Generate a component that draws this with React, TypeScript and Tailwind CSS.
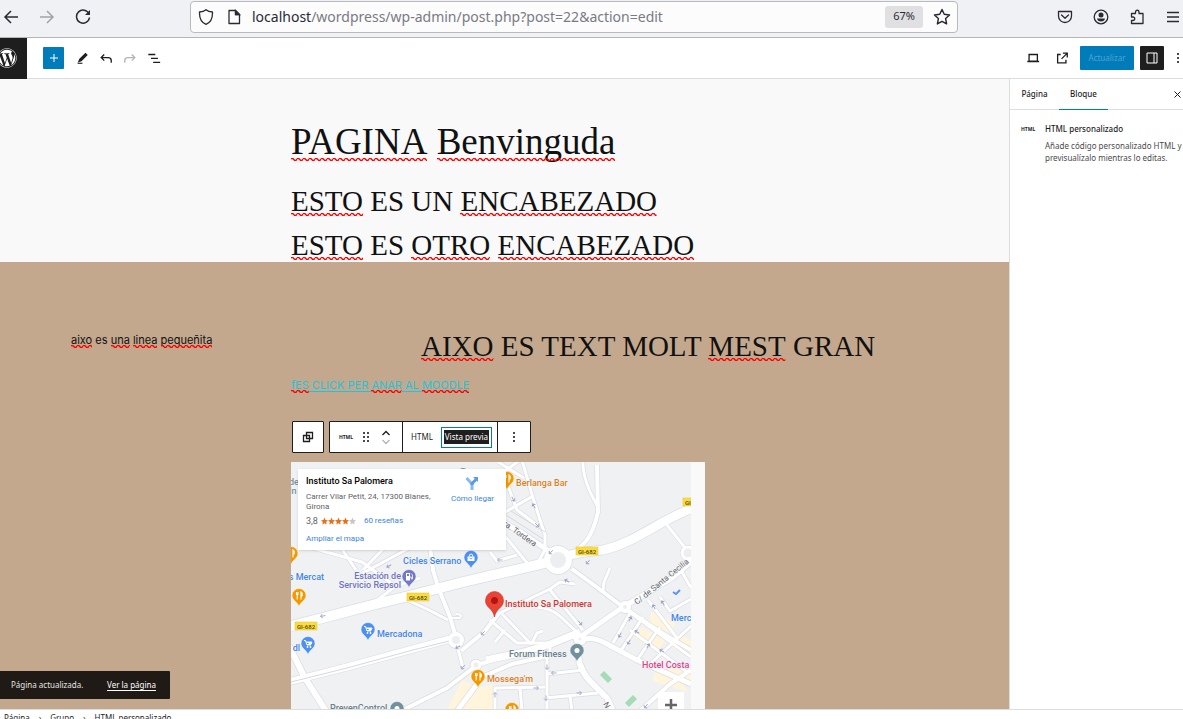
import React, { useState } from 'react';
import { FaWordpress } from 'react-icons/fa';

type IconProps = {
  size?: number;
  className?: string;
  children: React.ReactNode;
  viewBox?: string;
};

type PinProps = {
  x: number;
  y: number;
  color: string;
  kind?: 'food' | 'cart' | 'bag' | 'fuel' | 'dot';
};

//================== Map Data ==================
const roads: { d: string; w: number }[] = [
  // small streets
  { d: 'M522 460 L533 498 L545 535 V552', w: 3 },
  { d: 'M505 478 L517 510 L538 526', w: 3 },
  { d: 'M502 514 L533 496', w: 3 },
  { d: 'M498 462 L524 478 M520 460 L505 471', w: 3 },
  { d: 'M583 460 Q582 480 598 507', w: 3 },
  { d: 'M597 465 L598 512 Q594 530 587 540 L572 556', w: 4 },
  { d: 'M505 536 L528 564 M490 552 L497 561 L517 555', w: 3 },
  { d: 'M546 548 L537 564', w: 3 },
  { d: 'M667 525 L686 549', w: 3 },
  { d: 'M691 558 L682 572 L691 588', w: 3 },
  { d: 'M312 548 L362 562 L395 586', w: 3 },
  { d: 'M340 546 L356 570 M363 570 L384 548', w: 3 },
  { d: 'M376 601 L396 586 L420 578', w: 3 },
  { d: 'M363 573 L413 546', w: 3 },
  { d: 'M430 546 L433 570 L438 587 L450 617 L455 634', w: 4 },
  { d: 'M407 600 L427 609 L448 620', w: 3 },
  { d: 'M450 618 H460 Q463 614 456 614', w: 2 },
  { d: 'M461 651 L484 632 L500 612', w: 4 },
  { d: 'M500 613 L550 589 L560 582 L575 584', w: 3 },
  { d: 'M572 569 L598 588 L623 607', w: 4 },
  { d: 'M603 590 L604 582 L610 568', w: 3 },
  { d: 'M550 590 L583 630', w: 3 },
  { d: 'M533 607 Q550 606 562 618 L580 635', w: 3 },
  { d: 'M502 614 L530 643 H550 V652', w: 3 },
  { d: 'M490 620 L517 643 L532 643 L537 633 L543 631', w: 3 },
  { d: 'M495 642 L505 630', w: 3 },
  { d: 'M463 668 L457 645', w: 3 },
  { d: 'M405 709 L447 688 L477 665 L500 658', w: 4 },
  { d: 'M547 655 V711 M548 674 L583 670', w: 3 },
  { d: 'M495 711 V688 L545 687 M520 688 L522 711', w: 3 },
  { d: 'M545 698 L598 693 M570 696 L572 711', w: 3 },
  { d: 'M630 613 L613 643 M643 617 L620 652', w: 3 },
  { d: 'M660 627 L637 660 M691 626 L650 664', w: 3 },
  { d: 'M635 616 L691 657 M630 630 L687 672', w: 3 },
  { d: 'M648 600 L677 638 M660 597 L670 611 L691 599', w: 3 },
  { d: 'M691 670 L670 684 L640 711', w: 4 },
  // avenues
  { d: 'M500 520 L522 533 L549 551', w: 5 },
  { d: 'M583 635 L623 607 L672 578 L691 562', w: 5 },
  { d: 'M623 607 L657 630 L691 650', w: 4 },
  { d: 'M580 640 Q593 636 605 643 L637 660 L691 684', w: 5 },
  { d: 'M486 660 L520 653 L548 645 L580 632', w: 7 },
  { d: 'M484 676 L512 664 L548 656', w: 4 },
  { d: 'M578 655 Q580 672 592 683 L607 698 L613 711', w: 6 },
  { d: 'M477 684 L457 711', w: 5 },
  { d: 'M289 646 L305 678 L326 711', w: 6 },
  { d: 'M288 682 L347 667 L413 649 L450 639', w: 7 },
  { d: 'M288 627 L380 603 L413 595 L463 582 L545 563', w: 10 },
  { d: 'M570 555 Q586 551 603 550 C635 543 660 520 693 508', w: 9 },
];

const roundabouts = [
  { x: 558, y: 560, r: 11, w: 6 },
  { x: 456, y: 640, r: 6, w: 4 },
  { x: 476, y: 665, r: 4, w: 3 },
  { x: 580, y: 639, r: 4, w: 5 },
  { x: 688, y: 553, r: 6, w: 3 },
  { x: 625, y: 607, r: 4, w: 4 },
];

const arrows = [
  [323, 616, 170], [389, 566, 150], [458, 647, 150], [463, 667, 130], [483, 633, 135],
  [513, 499, 60], [534, 506, 240], [537, 525, 45], [551, 552, 140], [500, 560, 180],
  [588, 562, 130], [567, 581, 210], [580, 623, 50], [547, 667, 90], [554, 673, 180],
  [536, 688, 0], [546, 698, 90], [579, 693, 0], [495, 695, 270], [630, 619, 300],
  [620, 635, 120], [629, 642, 120], [648, 646, 300], [654, 607, 240], [663, 603, 240],
  [637, 632, 210], [662, 651, 210], [646, 706, 130],
];

//================== Shared Pieces ==================
const Icon = ({ size = 16, className = '', children, viewBox = '0 0 16 16' }: IconProps) => (
  <svg width={size} height={size} viewBox={viewBox} fill="none" stroke="currentColor" strokeWidth={1.3} className={`shrink-0 ${className}`} aria-hidden="true">
    {children}
  </svg>
);

// Word with the red spell checker line under it
const Typo = ({ children }: { children: React.ReactNode }) => (
  <span className="relative inline-block">
    {children}
    <svg className="absolute bottom-px left-0 h-[3px] w-full" aria-hidden="true">
      <defs>
        <pattern id="squiggle" width="6" height="3" patternUnits="userSpaceOnUse">
          <path d="M-1 1.500 L0 0.700 H2 L3.500 2.300 H5 L6.500 0.700" fill="none" stroke="#f00" strokeWidth="1.300" />
        </pattern>
      </defs>
      <rect width="100%" height="3" fill="url(#squiggle)" />
    </svg>
  </span>
);

const Dots = ({ className = '' }: { className?: string }) => (
  <svg width="4" height="14" viewBox="0 0 4 14" fill="#4a4a4a" className={className} aria-hidden="true">
    <rect x="1" y="2" width="2" height="2" />
    <rect x="1" y="6" width="2" height="2" />
    <rect x="1" y="10" width="2" height="2" />
  </svg>
);

const Pin = ({ x, y, color, kind = 'dot' }: PinProps) => (
  <g transform={`translate(${x} ${y})`}>
    <path d="M0 11 C-1 6 -7 4.500 -7 -0.500 A7 7 0 0 1 7 -0.500 C7 4.500 1 6 0 11Z" fill={color} stroke="#fff" strokeWidth="0.500" />
    {kind === 'food' && <path d="M-2.500 -4 V-1 M-1 -4 V-1 M-2.800 -1.500 H-0.800 M-1.800 -1 V3.500 M2 3.500 V-4 Q4 -2.500 3 0 H2" fill="none" stroke="#fff" strokeWidth="1.100" />}
    {kind === 'cart' && (
      <g fill="#fff">
        <path d="M-4 -3.500 H-2.500 L-1 1 H3 M-2 -2 H4 L3 0.500 H-1" stroke="#fff" strokeWidth="0.900" />
        <circle cx="-0.500" cy="3" r="0.900" />
        <circle cx="2.500" cy="3" r="0.900" />
      </g>
    )}
    {kind === 'bag' && (
      <g>
        <path d="M-3.500 -1.500 H3.500 V3 H-3.500Z" fill="#fff" />
        <path d="M-1.800 -1.500 Q-1.800 -4 0 -4 T1.800 -1.500" fill="none" stroke="#fff" />
        <path d="M-1.500 0 Q0 2 1.500 0" fill="none" stroke={color} strokeWidth="0.800" />
      </g>
    )}
    {kind === 'fuel' && (
      <g>
        <path d="M-3 -4 H1 V3.500 H-3Z" fill="#fff" />
        <path d="M-2 -3 H0 V-1 H-2Z" fill={color} />
        <path d="M1 0 H2.300 V2 H3.500 V-2 L2 -3.500" fill="none" stroke="#fff" strokeWidth="0.800" />
      </g>
    )}
    {kind === 'dot' && <circle r="2.500" cy="-0.500" fill="#fff" />}
  </g>
);

const RoadSign = ({ x, y }: { x: number; y: number }) => (
  <g>
    <rect x={x - 11} y={y - 4} width="22" height="8" fill="#fbdc3c" stroke="#e6c32e" strokeWidth="0.500" />
    <text x={x - 9} y={y + 3} fontSize="6" fontWeight="500" fill="#4d4719">GI-682</text>
  </g>
);

//================== Browser Toolbar ==================
const BrowserBar = () => (
  <header className="flex h-[38px] shrink-0 items-center border-b border-[#b5b6b9] bg-[#f0f1f4] pb-1 text-[#2b2a33]">
    <nav className="flex w-[190px] items-center gap-5 pl-[3px]">
      <button type="button" aria-label="Atrás">
        <Icon><path d="M15 8H2M8 2L2 8l6 6" strokeWidth={1.5} /></Icon>
      </button>
      <button type="button" aria-label="Adelante" disabled className="text-[#a3a3a7]">
        <Icon><path d="M1 8h13M8 2l6 6-6 6" strokeWidth={1.5} /></Icon>
      </button>
      <button type="button" aria-label="Recargar">
        <Icon><path d="M14 5A6.500 6.500 0 1 0 14.500 8.500" strokeWidth={1.5} /><path d="M15 1v5h-5z" fill="currentColor" stroke="none" /></Icon>
      </button>
    </nav>
    <div className="flex h-8 w-[768px] items-center rounded-[4px] border border-[#b9babd] bg-[#fcfcfd] pl-[7px] pr-1.5">
      <Icon><path d="M8 .8C6.500 2.200 4 3 1.500 3 1.300 8.500 3.500 13.500 8 15.300 12.500 13.500 14.700 8.500 14.500 3 12 3 9.500 2.200 8 .8z" strokeLinejoin="round" /></Icon>
      <Icon className="ml-3"><path d="M3 1.500h6.500L13.500 5.500v9H3zM9.500 1.500v4h4" strokeLinejoin="round" /><path d="M9.500 1.500v4h4z" fill="currentColor" /></Icon>
      <p className="ml-2.5 min-w-0 flex-1 truncate text-sm leading-5">
        localhost<span className="text-[#7b7a82]">/wordpress/wp-admin/post.php?post=22&amp;action=edit</span>
      </p>
      <button type="button" className="h-[22px] rounded-[3px] bg-[#e0e0e2] px-2 text-[11px]">67%</button>
      <button type="button" aria-label="Añadir a marcadores" className="ml-2.5">
        <Icon size={18}><path d="M8 1.300l2 4.300 4.700.6-3.500 3.200.9 4.700L8 11.800l-4.100 2.300.9-4.700L1.300 6.200 6 5.600z" strokeLinejoin="round" /></Icon>
      </button>
    </div>
    <div className="ml-auto flex w-[126px] shrink-0 items-center gap-5 pr-1">
      <button type="button" aria-label="Pocket">
        <Icon><path d="M1.500 2.500h13V7a6.500 6.500 0 0 1-13 0zM4.500 6L8 9.300 11.500 6" strokeLinejoin="round" strokeLinecap="round" /></Icon>
      </button>
      <button type="button" aria-label="Cuenta">
        <Icon><circle cx="8" cy="8" r="6.800" /><circle cx="8" cy="6" r="2.500" fill="currentColor" stroke="none" /><path d="M4 9.500h8Q11.500 12.500 8 12.500T4 9.500z" fill="currentColor" stroke="none" /></Icon>
      </button>
      <button type="button" aria-label="Extensiones">
        <Icon><path d="M2.500 4.500H6.500V3A1.700 1.700 0 0 1 10 3V4.500H14V14.500H2.500V11.500H4A1.700 1.700 0 0 0 4 8H2.500z" strokeLinejoin="round" /></Icon>
      </button>
      <button type="button" aria-label="Menú">
        <Icon><path d="M2 3.500h12M2 8h12M2 12.500h12" strokeWidth={1.5} /></Icon>
      </button>
    </div>
  </header>
);

//================== Editor Header ==================
const EditorHeader = () => (
  <div className="flex h-[41px] shrink-0 items-center border-b border-[#dddddd] bg-white text-[#1e1e1e]">
    <a href="#" aria-label="Ver páginas" className="flex h-[41px] w-[27px] items-center overflow-hidden bg-[#1e1e1e] text-white">
      <FaWordpress size={20} className="-ml-[3px] shrink-0" />
    </a>
    <div className="ml-4 flex items-center gap-2.5">
      <button type="button" aria-label="Añadir bloque" className="mr-px flex h-[22px] w-[21px] items-center justify-center rounded-[1px] bg-[#007cba] text-white">
        <Icon size={10} viewBox="0 0 10 10"><path d="M5 1v8M1 5h8" strokeWidth={1} /></Icon>
      </button>
      <button type="button" aria-label="Herramientas">
        <Icon size={14}><path d="M5.500 9.500L12 3l1.500 1.500-6.500 6.500-2.500.8z" fill="currentColor" strokeWidth={1.500} /><path d="M3 14h5.500" /></Icon>
      </button>
      <button type="button" aria-label="Deshacer">
        <Icon size={14}><path d="M6 4L2.500 7.500l3.500 3.500M2.500 7.500h8q3.500 0 3.500 3.500v2.500" strokeWidth={1.500} /></Icon>
      </button>
      <button type="button" aria-label="Rehacer" disabled className="text-[#b4b4b4]">
        <Icon size={14}><path d="M10 4l3.500 3.500L10 11M13.500 7.500h-8q-3.500 0-3.500 3.500v2.500" strokeWidth={1.500} /></Icon>
      </button>
      <button type="button" aria-label="Vista de lista">
        <Icon size={14}><path d="M1.500 4h8M4.500 8.500h8M7 13h8" strokeWidth={1.500} /></Icon>
      </button>
    </div>
    <div className="ml-auto flex items-center gap-[6px]">
      <button type="button" aria-label="Ver" className="mr-[9px]">
        <Icon size={14}><path d="M3.500 4h9.500v7.500h-9.500zM1.500 12h13.500" strokeWidth={1.500} /></Icon>
      </button>
      <button type="button" aria-label="Ver página" className="mr-[5px]">
        <Icon size={14}><path d="M6.500 4H3v9.500h9.500v-3.500M9 2.500h5v5M13.500 3L7.500 9" strokeWidth={1.500} /></Icon>
      </button>
      <button type="button" disabled className="h-6 w-[54px] rounded-[1px] bg-[#007cba] text-[8px] text-[#4fa5d0]">Actualizar</button>
      <button type="button" aria-label="Ajustes" className="flex h-6 w-6 items-center justify-center rounded-[1px] bg-[#1e1e1e] text-white">
        <Icon size={12} viewBox="0 0 12 12"><path d="M1 1h10v10H1zM8 1v10" strokeWidth={1} /></Icon>
      </button>
      <button type="button" aria-label="Opciones" className="ml-1.5 mr-[3px]"><Dots /></button>
    </div>
  </div>
);

//================== Block Toolbar ==================
const BlockToolbar = () => (
  <div className="flex h-8 gap-[5px] pl-px text-[8px] leading-3 text-[#1e1e1e]">
    <button type="button" aria-label="Seleccionar grupo" className="flex w-8 items-center justify-center rounded-[1px] border border-[#1e1e1e] bg-white">
      <Icon size={12} viewBox="0 0 12 12"><path d="M4.500 1.500h6v6h-6zM1.500 4.500h6v6h-6z" /></Icon>
    </button>
    <div className="flex divide-x divide-[#1e1e1e] rounded-[1px] border border-[#1e1e1e] bg-white">
      <div className="flex w-[73px] items-center gap-2 pl-2">
        <button type="button" className="w-4 text-[5px] font-bold">HTML</button>
        <button type="button" aria-label="Arrastrar">
          <svg width="8" height="12" viewBox="0 0 8 12" fill="#4a4a4a" aria-hidden="true">
            {[1, 5, 9].map(y => (
              <g key={y}>
                <rect x="1" y={y} width="2" height="2" />
                <rect x="5" y={y} width="2" height="2" />
              </g>
            ))}
          </svg>
        </button>
        <div className="flex flex-col gap-[3px] pl-1">
          <button type="button" aria-label="Mover arriba"><svg width="8" height="6" viewBox="0 0 8 6" fill="none" stroke="#1e1e1e" strokeWidth="1.300"><path d="M0.500 5L4 1.500L7.500 5" /></svg></button>
          <button type="button" aria-label="Mover abajo" disabled><svg width="8" height="6" viewBox="0 0 8 6" fill="none" stroke="#b4b4b4" strokeWidth="1.300"><path d="M0.500 1L4 4.500L7.500 1" /></svg></button>
        </div>
      </div>
      <div className="flex w-[95px] items-center justify-between pl-2 pr-[5px]">
        <button type="button">HTML</button>
        <button type="button" className="flex h-[21px] items-center border border-[#007cba] px-0.5">
          <span className="bg-[#1e1e1e] px-px py-px text-white">Vista previa</span>
        </button>
      </div>
      <button type="button" aria-label="Opciones" className="flex w-8 items-center justify-center"><Dots /></button>
    </div>
  </div>
);

//================== Map ==================
const MapEmbed = () => (
  <div className="relative w-[400px] font-['Roboto',sans-serif]">
    <svg width="400" height="300" viewBox="291 462 400 300" className="block" role="img" aria-label="Mapa de Instituto Sa Palomera">
      <rect x="291" y="462" width="400" height="300" fill="#f0f1f3" />
      <g fill="#fef5dc">
        <path d="M462 680 L478 688 L497 684 L497 711 H446Z" />
        <path d="M651 612 L675 623 L672 634 L650 624Z M641 627 L665 640 L658 652 L634 638Z M676 633 L691 640 V656 L668 646Z M655 669 L678 676 L688 692 L653 681Z M672 660 L691 668 V680 L668 672Z" />
      </g>
      <g fill="none" stroke="#dadde3" strokeLinejoin="round">
        {roads.map(road => <path key={road.d} d={road.d} strokeWidth={road.w + 1.4} />)}
        {roundabouts.map(r => <circle key={r.x} cx={r.x} cy={r.y} r={r.r} strokeWidth={r.w + 1.4} />)}
      </g>
      <g fill="none" stroke="#fff" strokeLinejoin="round">
        {roads.map(road => <path key={road.d} d={road.d} strokeWidth={road.w} />)}
        {roundabouts.map(r => <circle key={r.x} cx={r.x} cy={r.y} r={r.r} strokeWidth={r.w} fill="#eceef1" />)}
      </g>
      <path d="M291 682 L347 668 L413 650 L449 641 M506 515 L543 539 M511 511 L545 532" fill="none" stroke="#d5d8de" strokeWidth="1" />
      <g fill="none" stroke="#9ea4c6" strokeWidth="0.900">
        {arrows.map(([x, y, angle]) => (
          <path key={`${x}-${y}`} d="M-2.500 0H2.500M0.500 -2L2.500 0L0.500 2" transform={`translate(${x} ${y}) rotate(${angle})`} />
        ))}
      </g>
      <path d="M600 675 L604 671 L612 679 L608 683Z M625 703 L633 695 L637 699 L629 707Z" fill="#a5dbb5" />
      <path d="M673 592 L676 594 L680 590" fill="none" stroke="#5b95f0" strokeWidth="2" />

      <RoadSign x={587} y={551} />
      <RoadSign x={418} y={597} />
      <RoadSign x={306} y={626} />
      <RoadSign x={694} y={502} />

      <Pin x={507} y={479} color="#f29900" kind="food" />
      <Pin x={291} y={554} color="#f29900" kind="food" />
      <Pin x={299} y={596} color="#f29900" kind="food" />
      <Pin x={478} y={677} color="#f29900" kind="food" />
      <Pin x={512} y={710} color="#f29900" kind="food" />
      <Pin x={368} y={630} color="#4d90f0" kind="cart" />
      <Pin x={308} y={644} color="#4d90f0" kind="cart" />
      <Pin x={471} y={558} color="#4d90f0" kind="bag" />
      <Pin x={409} y={577} color="#7478c6" kind="fuel" />
      <Pin x={577} y={651} color="#73909d" />
      <Pin x={397} y={709} color="#73909d" />
      <circle cx="463" cy="474" r="6" fill="#73909d" />
      <path d="M494.500 617 C493 608 485.500 608 485.500 600.500 A9 9 0 0 1 503.500 600.500 C503.500 608 496 608 494.500 617Z" fill="#ea4335" stroke="#c5352b" strokeWidth="0.600" />
      <circle cx="494.500" cy="600.500" r="3.500" fill="#b31412" />

      <g fontSize="9" fontWeight="500" stroke="#f6f7f9" strokeWidth="1" paintOrder="stroke" strokeLinejoin="round">
        <text x="516" y="486" fill="#dd7f22">Berlanga Bar</text>
        <text x="403" y="564" fill="#4285e8">Cicles Serrano</text>
        <text x="401" y="579" textAnchor="end" fill="#7073bb">Estación de</text>
        <text x="401" y="588" textAnchor="end" fill="#7073bb">Servicio Repsol</text>
        <text x="377" y="637" fill="#4285e8">Mercadona</text>
        <text x="324" y="580" textAnchor="end" fill="#4285e8">s Mercat</text>
        <text x="300" y="651" textAnchor="end" fill="#4285e8">dl</text>
        <text x="505" y="607" fill="#cc3630">Instituto Sa Palomera</text>
        <text x="509" y="657" fill="#67808d">Forum Fitness</text>
        <text x="487" y="682" fill="#dd7f22">Mossega'm</text>
        <text x="330" y="711" fill="#67808d">PrevenControl</text>
        <text x="671" y="621" fill="#4285e8">Merc</text>
        <text x="642" y="668" fill="#e0418a">Hotel Costa</text>
        <text x="289" y="485" fill="#73909d">de</text>
        <text x="289" y="494" fill="#73909d">In</text>
        <g fontSize="8" fontWeight="400" fill="#5f6368">
          <text transform="translate(503 525) rotate(35)">ra. Tordera</text>
          <text transform="translate(637 605) rotate(-39)">C/ de Santa Cecilia</text>
          <text transform="translate(603 704) rotate(60)">N</text>
        </g>
      </g>
    </svg>

    {/* Place card */}
    <div className="absolute left-[7px] top-[7px] flex h-[81px] w-[208px] justify-between bg-white pl-2 pr-3 pt-1.5 text-[8px] leading-[10px] text-[#5f6368] shadow-sm">
      <div className="w-[130px]">
        <h3 className="text-[9px] font-medium leading-3 text-black">Instituto Sa Palomera</h3>
        <p className="mt-[5px]">Carrer Vilar Petit, 24, 17300 Blanes, Girona</p>
        <p className="mt-1 flex items-center">
          <span className="text-[9px]">3,8</span>
          <span className="ml-[3px] flex" aria-hidden="true">
            {[0, 1, 2, 3, 4].map(i => (
              <svg key={i} width="7" height="8" viewBox="0 0 16 16" fill={i < 4 ? '#e7711b' : '#c6c6c6'}>
                <path d="M8 0l2.400 5.500 5.600.6-4.200 4 1.200 5.900L8 13l-5 3 1.200-5.900L0 6.100l5.600-.6z" />
              </svg>
            ))}
          </span>
          <a href="#" className="ml-2 text-[#3a84df]">60 reseñas</a>
        </p>
        <a href="#" className="mt-2 block text-[#3a84df]">Ampliar el mapa</a>
      </div>
      <a href="#" className="flex flex-col items-center gap-1 pt-px text-[#3a84df]">
        <svg width="14" height="14" viewBox="0 0 14 14" aria-hidden="true">
          <path d="M1.500 2L7 8V14" fill="none" stroke="#8ab8f0" strokeWidth="3" />
          <path d="M7 9V7.500L11 3.500" fill="none" stroke="#5b9ae8" strokeWidth="3" />
          <path d="M8 1h5v5z" fill="#5b9ae8" />
        </svg>
        Cómo llegar
      </a>
    </div>

    {/* Zoom control */}
    <button type="button" aria-label="Acercar" className="absolute left-[367px] top-[230px] flex h-[26px] w-[26px] items-center justify-center bg-white text-[#666666]">
      <Icon size={12} viewBox="0 0 12 12"><path d="M6 0v12M0 6h12" strokeWidth={2.5} /></Icon>
    </button>
  </div>
);

//================== Settings Sidebar ==================
const Sidebar = () => {
  const [tab, setTab] = useState('bloque');

  return (
    <aside className="w-[174px] shrink-0 overflow-hidden border-l border-[#dddddd] bg-white text-[8px] leading-3 text-[#1e1e1e]">
      <div className="flex h-[31px] items-stretch border-b border-[#dddddd]">
        {[{ id: 'pagina', label: 'Página' }, { id: 'bloque', label: 'Bloque' }].map(item => (
          <button
            key={item.id}
            type="button"
            onClick={() => setTab(item.id)}
            className={`-mb-px w-[49px] border-b font-medium ${tab === item.id ? 'border-[#007cba]' : 'border-transparent'}`}
          >
            {item.label}
          </button>
        ))}
        <button type="button" aria-label="Cerrar" className="ml-auto pr-0.5">
          <Icon size={7} viewBox="0 0 7 7"><path d="M.5.5l6 6M6.500.5l-6 6" strokeWidth={1} /></Icon>
        </button>
      </div>
      <div className="flex gap-2 whitespace-nowrap pl-[11px] pt-[13px]">
        <span className="w-4 shrink-0 text-[5px] font-bold">HTML</span>
        <div>
          <h2 className="font-medium">HTML personalizado</h2>
          <p className="mt-[5px] text-[#4a4a4a]">
            Añade código personalizado HTML y<br />
            previsualízalo mientras lo editas.
          </p>
        </div>
      </div>
    </aside>
  );
};

//================== Page ==================
const App: React.FC = () => {
  return (
    <div className="flex h-screen flex-col overflow-hidden bg-white font-['Noto_Sans',sans-serif]">
      <BrowserBar />
      <EditorHeader />

      <div className="flex min-h-0 flex-1">
        <main className="relative min-w-0 flex-1 overflow-hidden bg-[#f9f9f9] pr-[13px] text-[#111111]">
          <div className="mx-auto max-w-[414px] whitespace-nowrap pt-[43px] font-['Liberation_Serif',serif]">
            <h1 className="text-[37px] leading-10"><Typo>PAGINA</Typo> <Typo>Benvinguda</Typo></h1>
            <h2 className="mt-[23px] text-[29px] leading-8"><Typo>ESTO</Typo> ES UN <Typo>ENCABEZADO</Typo></h2>
            <h2 className="mt-3 text-[29px] leading-8"><Typo>ESTO</Typo> ES <Typo>OTRO</Typo> <Typo>ENCABEZADO</Typo></h2>
          </div>

          <section className="-mr-[13px] mt-px bg-[#c3a88d] pr-[13px] pt-[68px]">
            <div className="flex whitespace-nowrap pl-[71px]">
              <p className="w-[350px] pt-0.5 font-['Inter',sans-serif] text-[11px] leading-[17px]">
                <Typo>aixo</Typo> es <Typo>una</Typo> <Typo>linea</Typo> <Typo>pequeñita</Typo>
              </p>
              <h2 className="font-['Liberation_Serif',serif] text-[29px] leading-8">
                <Typo>AIXO</Typo> ES TEXT MOLT <Typo>MEST</Typo> GRAN
              </h2>
            </div>
            <div className="mx-auto max-w-[414px]">
              <a href="#" className="mt-[15px] block whitespace-nowrap font-['Inter',sans-serif] text-[11px] leading-[17px] text-[#1fc4dc] underline underline-offset-2">
                <Typo>fES</Typo> CLICK PER <Typo>ANAR</Typo> AL <Typo>MOODLE</Typo>
              </a>
              <div className="mt-[27px]"><BlockToolbar /></div>
              <div className="mt-[9px] bg-[#f9f9f9]"><MapEmbed /></div>
            </div>
          </section>

          {/* Snackbar */}
          <div role="status" className="absolute bottom-[10px] left-0 flex h-7 w-[170px] items-center justify-between rounded-r-[1px] bg-[#1f1a15] pl-[11px] pr-3.5 text-[8px] text-[#e6e4e2]">
            <span>Página actualizada.</span>
            <a href="#" className="text-white underline underline-offset-2">Ver la página</a>
          </div>
        </main>
        <Sidebar />
      </div>

      {/* Block breadcrumb */}
      <footer className="h-[10px] shrink-0 border-t border-[#dddddd] bg-white pl-1 text-[8px] leading-4 text-[#1e1e1e]">
        <ol className="flex gap-[9px]">
          <li>Página</li>
          <li aria-hidden="true">›</li>
          <li>Grupo</li>
          <li aria-hidden="true">›</li>
          <li>HTML personalizado</li>
        </ol>
      </footer>
    </div>
  );
};

export default App;
